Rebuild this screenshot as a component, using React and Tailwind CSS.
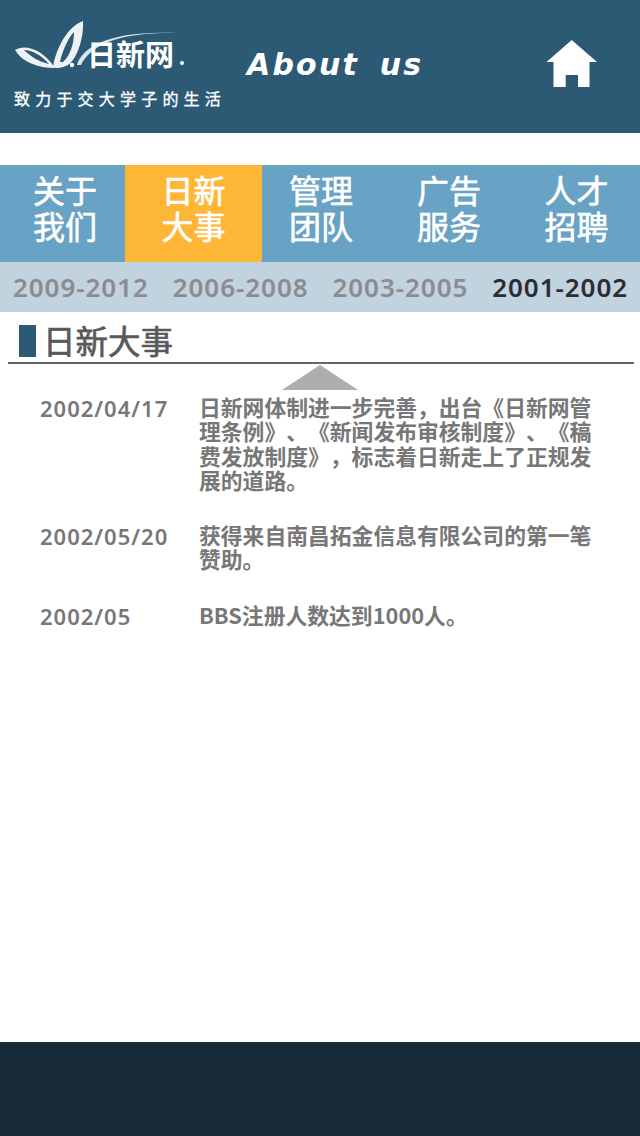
const cjk = "font-['Noto_Sans_CJK_SC','Noto_Sans',sans-serif]";

const tabs = [
  { lines: ["关于", "我们"], cls: "w-[125px] pl-[5px]" },
  { lines: ["日新", "大事"], cls: "w-[137px] bg-[#fdb635]" },
  { lines: ["管理", "团队"], cls: "w-[123px] pr-[5px]" },
  { lines: ["广告", "服务"], cls: "w-[128px]" },
  { lines: ["人才", "招聘"], cls: "w-[127px]" },
];

const years = ["2009-2012", "2006-2008", "2003-2005", "2001-2002"];

const events = [
  {
    date: "2002/04/17",
    text: "日新网体制进一步完善，出台《日新网管理条例》、《新闻发布审核制度》、《稿费发放制度》，标志着日新走上了正规发展的道路。",
    cls: "h-[128px]",
  },
  {
    date: "2002/05/20",
    text: "获得来自南昌拓金信息有限公司的第一笔赞助。",
    cls: "h-[80px]",
  },
  { date: "2002/05", text: "BBS注册人数达到1000人。", cls: "" },
];

const Logo = () => (
  <div className="relative w-[190px] h-[52px]">
    <svg width="190" height="52" viewBox="14 18 190 52" fill="none" className="absolute left-0 top-0">
      <path d="M15 50 C 24 44 42 48 55 68 C 38 68 22 62 15 50 Z M24 50 C 31 57 40 62 49 64 C 41 55 32 50 24 50 Z" fill="#eef2f5" fillRule="evenodd" />
      <path d="M53 67 C 56 48 68 26 83 21 C 84 40 76 60 68 65 C 62 68 56 69 53 67 Z M60 62 C 62 52 68 38 74 32 C 74 44 70 56 63 62 Z" fill="#eef2f5" fillRule="evenodd" />
      <path d="M77 65 C 82 46 112 30 177 33 C 125 32 92 42 81 65 Z" fill="#dbe4ea" />
      <circle cx="72" cy="65" r="2.2" fill="#fff" />
    </svg>
    <span className={`absolute left-[73px] top-[16px] text-[29px] leading-[38px] font-bold text-white whitespace-nowrap ${cjk}`}>日新网</span>
    <span className="absolute left-[166px] top-[43px] w-[4px] h-[4px] rounded-full bg-white" />
  </div>
);

const App = () => {
  return (
    <div className={`h-[1136px] w-[640px] flex flex-col bg-white [text-spacing-trim:space-all] ${cjk}`}>
      <header className="h-[133px] bg-[#2c5a75] flex">
        <div className="w-[246px] pl-[14px] pt-[18px]">
          <Logo />
          <p className="mt-[15px] text-[16px] leading-[26px] tracking-[5.2px] [-webkit-text-stroke:0.3px] text-white whitespace-nowrap">致力于交大学子的生活</p>
        </div>
        <h1 className="pl-px pt-[43px] w-[280px] text-[30px] leading-[44px] tracking-[2.2px] [word-spacing:8px] italic font-bold text-white font-['DejaVu_Sans',sans-serif] whitespace-nowrap">About us</h1>
        <div className="pt-[40px] pl-[20px]">
          <svg width="52" height="48" viewBox="0 0 52 48" fill="#fff">
            <path d="M25.7 0 L51 22 L43.5 22 L43.5 47 L32 47 L32 35 L19.7 35 L19.7 47 L7.5 47 L7.5 22 L0.5 22 Z" />
          </svg>
        </div>
      </header>

      <nav className="mt-8 h-[97px] bg-[#68a2c4] flex text-white text-[32px] leading-[36px] [-webkit-text-stroke:0.6px]">
        {tabs.map((tab) => (
          <div key={tab.lines[0]} className={`flex flex-col items-center justify-start pt-[6px] ${tab.cls}`}>
            <span>{tab.lines[0]}</span>
            <span>{tab.lines[1]}</span>
          </div>
        ))}
      </nav>

      <div className="h-[50px] bg-[#c0d3df] grid grid-cols-4 items-center text-center pl-px text-[26px] font-semibold tracking-[0.95px] font-['Noto_Sans',sans-serif]">
        {years.map((y, i) => (
          <span key={y} className={i === 3 ? "text-[#2b2d33]" : "text-[#8b8b90]"}>{y}</span>
        ))}
      </div>

      <main className="flex-1">
        <div className="mx-[8px] w-[626px] h-[52px] border-b-2 border-[#666] flex items-start pl-[11px] pt-[13px]">
          <span className="w-[17px] h-[32px] bg-[#2c5a75]" />
          <h2 className="ml-[7px] text-[32.5px] leading-[30px] [-webkit-text-stroke:0.7px] text-[#595959]">日新大事</h2>
        </div>
        <div className="flex justify-start pl-[282px] pt-[1px]">
          <svg width="76" height="25" viewBox="0 0 76 25" fill="#b0adae">
            <path d="M38 0 L76 25 L0 25 Z" />
          </svg>
        </div>
        <div className="pl-[40px] pt-[6px] text-[#777] font-bold">
          {events.map((ev) => (
            <div key={ev.date} className={`flex ${ev.cls}`}>
              <span className="w-[159px] shrink-0 text-[22px] leading-[24px] font-semibold tracking-[1px] font-['Noto_Sans',sans-serif]">{ev.date}</span>
              <p className="w-[393px] -mt-px text-[21.8px] leading-[24.4px]">{ev.text}</p>
            </div>
          ))}
        </div>
      </main>

      <footer className="h-[94px] bg-[#182b3a]" />
    </div>
  );
};

export default App;
